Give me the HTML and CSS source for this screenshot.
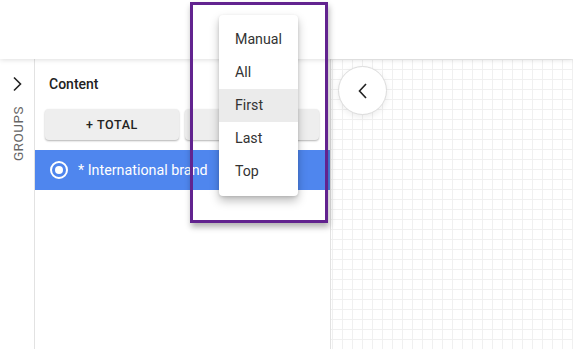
FILE: index.html
```html
<!DOCTYPE html>
<html>
<head>
<meta charset="utf-8">
<link rel="stylesheet" href="styles.css">
</head>
<body>
<div class="app">
  <header class="topbar"></header>
  <div class="main">
    <aside class="strip">
      <svg class="chev" width="12" height="16" viewBox="0 0 12 16"><path d="M3 1.5 L9.5 8 L3 14.5" fill="none" stroke="#222" stroke-width="1.6"/></svg>
      <div class="groups">GROUPS</div>
    </aside>
    <section class="panel">
      <div class="title">Content</div>
      <div class="btns">
        <button class="btn">+ TOTAL</button>
        <button class="btn" aria-label="add"></button>
      </div>
      <div class="row">
        <svg width="20" height="20" viewBox="0 0 20 20"><circle cx="10" cy="10" r="8" fill="none" stroke="#fff" stroke-width="2"/><circle cx="10" cy="10" r="4" fill="#fff"/></svg>
        <span>* International brand</span>
      </div>
    </section>
    <section class="canvas"></section>
  </div>
  <div class="focus"></div>
  <ul class="menu">
    <li>Manual</li>
    <li>All</li>
    <li class="hl">First</li>
    <li>Last</li>
    <li>Top</li>
  </ul>
  <div class="back">
    <svg width="14" height="18" viewBox="0 0 14 18"><path d="M10 2 L3.5 9 L10 16" fill="none" stroke="#222" stroke-width="1.6"/></svg>
  </div>
</div>
</body>
</html>
```
FILE: styles.css
```css
* { box-sizing: border-box; }
html, body { margin: 0; padding: 0; }
body {
  font-family: Roboto, "Liberation Sans", sans-serif;
  background: #fff;
  width: 573px;
  height: 349px;
  overflow: hidden;
}
.app { position: relative; width: 573px; height: 349px; display: flex; flex-direction: column; }
.topbar {
  height: 59px;
  flex: none;
  background: #fff;
  box-shadow: 0 1px 5px rgba(0,0,0,0.13);
  position: relative;
  z-index: 2;
}
.main { flex: 1; display: flex; min-height: 0; }
.strip {
  width: 35px;
  flex: none;
  border-right: 1px solid #e2e2e2;
  display: flex;
  flex-direction: column;
  align-items: center;
  padding-top: 17px;
}
.chev { display: block; }
.groups {
  writing-mode: vertical-rl;
  transform: rotate(180deg);
  font-size: 13.5px;
  color: #666;
  letter-spacing: 0.5px;
  margin-top: 14px;
  margin-left: 1px;
}
.panel {
  width: 296px;
  flex: none;
  border-right: 1px solid #e2e2e2;
  display: flex;
  flex-direction: column;
}
.title {
  font-size: 14px;
  font-weight: 500;
  color: #222;
  padding: 17px 0 0 14px;
  height: 50px;
}
.btns { display: flex; gap: 6px; padding: 0 0 0 10px; }
.btn {
  width: 134px;
  height: 31px;
  border: none;
  border-radius: 4px;
  background: #eeeeee;
  box-shadow: 0 1px 2px rgba(0,0,0,0.3);
  font-family: inherit;
  font-size: 12.5px;
  font-weight: 500;
  letter-spacing: 0.6px;
  color: #222;
  padding: 0;
}
.row {
  margin-top: 10px;
  height: 40px;
  background: #4f86ee;
  display: flex;
  align-items: center;
  gap: 9px;
  padding-left: 14px;
  color: #fff;
  font-size: 14.3px;
}
.canvas {
  flex: 1;
  background-color: #fff;
  background-image:
    linear-gradient(to right, #f0f0f0 1px, transparent 1px),
    linear-gradient(to bottom, #f0f0f0 1px, transparent 1px);
  background-size: 10px 10px;
  background-position: 1px 0;
}
.focus {
  position: absolute;
  left: 190px;
  top: 2px;
  width: 138px;
  height: 221px;
  border: 3px solid #62238f;
  box-shadow: 1px 4px 6px rgba(0,0,0,0.3);
  z-index: 5;
}
.menu {
  position: absolute;
  left: 219px;
  top: 15px;
  width: 79px;
  margin: 0;
  padding: 8px 0;
  list-style: none;
  background: #fff;
  border-radius: 4px;
  box-shadow: 0 5px 10px rgba(0,0,0,0.25), 0 1px 3px rgba(0,0,0,0.12);
  z-index: 6;
}
.menu li {
  height: 33px;
  line-height: 33px;
  padding-left: 16px;
  font-size: 14.2px;
  color: #333;
}
.menu li.hl { background: #ebebeb; }
.back {
  position: absolute;
  left: 338px;
  top: 66px;
  width: 49px;
  height: 49px;
  border-radius: 50%;
  background: #fff;
  border: 1px solid #dcdcdc;
  box-shadow: 0 2px 6px rgba(0,0,0,0.08);
  display: flex;
  align-items: center;
  justify-content: center;
  z-index: 3;
}
```
